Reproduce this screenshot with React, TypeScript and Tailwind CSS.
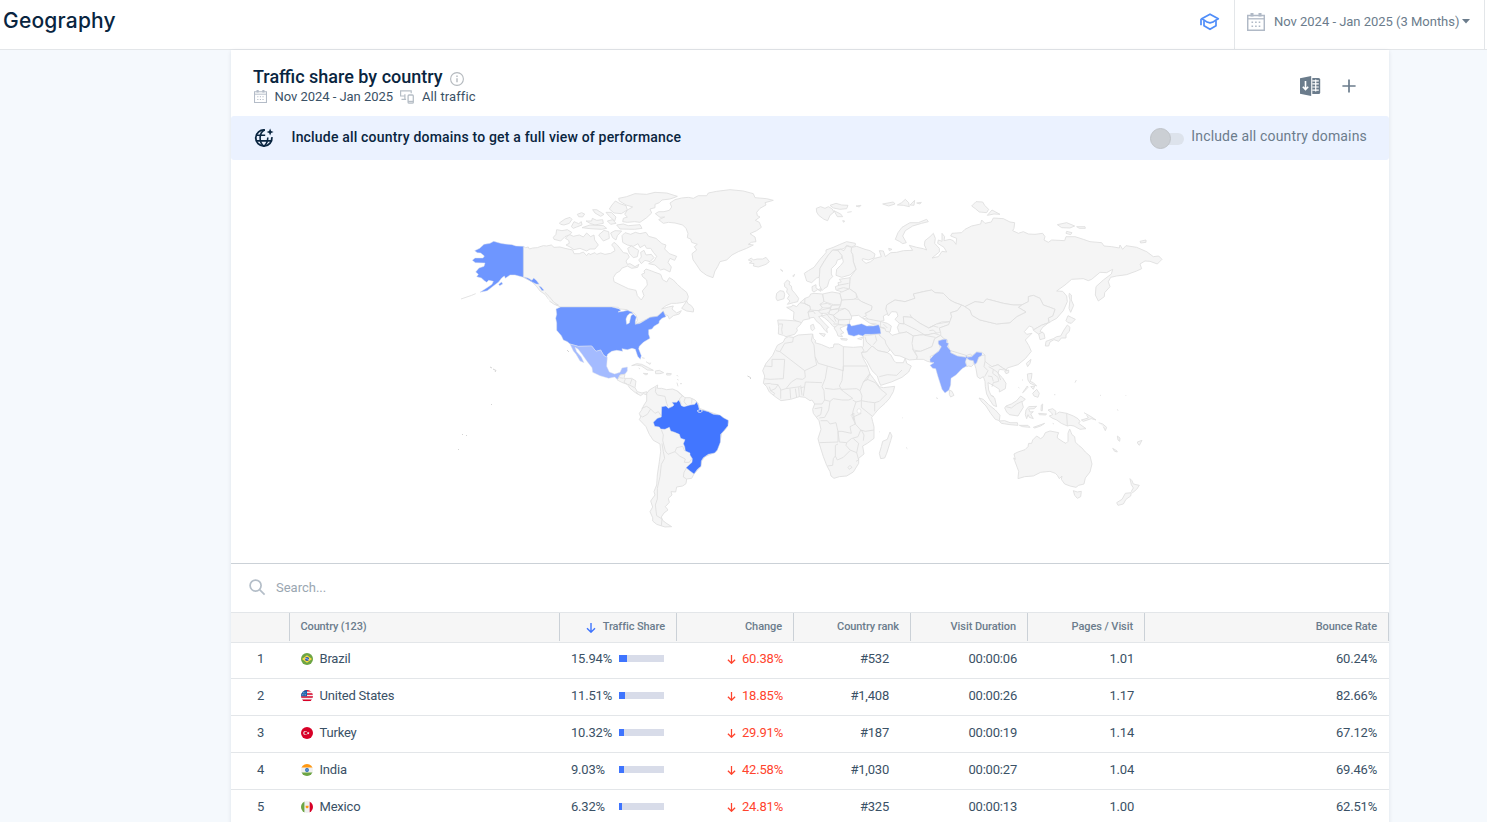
import React from "react";

const NA_LAND = [
  "M-50 184L-43 188L-35 186L-32 192L-22 189L-8 188L0 185L10 182L20 183L34 180L42 187L60 186L75 190L98 195L102 206L118 206L130 201L140 212L146 204L150 209L165 203L170 208L182 204L195 208L212 205L225 197L222 188L215 180L222 172L230 178L240 190L250 203L262 205L268 216L258 228L262 238L270 236L285 245L297 238L293 247L275 250L262 243L245 250L240 258L228 265L220 278L222 290L240 299L265 311L288 316L292 332L304 345L312 332L307 318L322 300L320 285L308 275L305 268L314 264L312 258L318 252L335 258L345 262L362 268L368 284L380 291L388 278L400 285L412 298L425 310L440 322L445 335L442 346L430 352L410 355L395 355L378 362L365 372L385 366L400 363L396 372L410 384L424 377L418 387L400 392L388 402L384 392L374 388L370 378L358 388L352 394L332 396L315 405L300 412L286 418L292 406L289 392L280 382L268 380L262 374L240 372L235 367L215 366L62 366L48 360L38 352L26 343L15 328L0 318L-12 302L-25 290L-50 277Z",
  "M88 148L100 154L118 150L130 156L140 144L152 155L162 150L164 165L175 180L165 192L150 192L140 198L120 190L102 194L90 186L78 180L88 175L86 166L76 160Z",
  "M50 134L66 137L82 134L95 142L90 149L75 155L62 168L42 163L40 157L48 148Z",
  "M58 114L75 102L90 97L96 103L88 115L72 120L62 118Z",
  "M94 125L102 110L116 116L124 110L126 120L110 126L100 130Z",
  "M112 88L125 83L134 87L128 96L116 95Z",
  "M158 74L170 74L192 88L182 94L165 84Z",
  "M138 108L155 108L157 100L170 106L188 104L190 115L165 120L152 116Z",
  "M126 128L150 120L190 122L200 130L185 133L150 131Z",
  "M176 150L192 136L206 140L208 160L190 168L182 158Z",
  "M212 144L225 137L245 138L232 152L228 165L218 158Z",
  "M202 108L218 104L228 115L212 118Z",
  "M198 82L214 82L228 96L224 108L208 94Z",
  "M230 120L250 117L265 122L300 119L306 130L284 133L240 132Z",
  "M208 72L216 60L226 48L240 56L258 62L262 75L244 86L222 84Z",
  "M236 40L260 35L285 26L320 28L345 22L380 24L412 34L402 38L390 42L366 45L358 53L345 58L345 68L330 72L335 84L320 98L300 112L284 110L262 112L248 110L250 100L262 96L254 88L262 75L278 66L258 60L238 48Z",
  "M246 152L255 143L272 148L286 142L300 146L318 142L326 154L348 160L366 176L378 180L374 192L388 206L410 214L404 226L390 220L384 232L394 246L390 261L372 252L362 255L345 240L326 236L342 228L350 214L340 202L332 190L320 190L314 180L300 188L294 176L280 184L262 180L248 172Z",
  "M302 202L312 196L318 210L334 208L342 218L330 230L315 226L304 236L296 225L304 216Z",
  "M263 190L274 183L296 196L292 215L280 218L268 205Z",
  "M425 370L432 360L440 348L444 356L454 362L461 372L460 381L440 378Z",
  "M346 86L356 80L372 80L388 76L395 66L390 54L405 44L425 39L445 37L460 40L475 32L500 32L505 24L530 19L570 14L610 18L640 26L645 38L680 41L700 46L675 53L678 60L660 70L650 82L652 92L660 96L646 106L658 112L664 127L650 137L630 146L645 156L648 170L634 172L625 178L640 180L620 190L595 200L576 210L560 225L540 230L533 245L525 258L519 278L500 271L482 258L470 240L459 224L456 206L470 195L463 185L472 178L455 172L452 162L442 158L444 145L438 130L428 120L405 114L385 112L370 115L356 104L374 96L360 97Z",
  "M625 225L634 219L640 225L652 222L668 222L678 217L688 230L678 238L655 246L640 243L642 236L628 234L636 229Z",
  "M-237 342L-205 331L-193 326M15 322L28 335L42 352L55 360L44 359L28 348",
];

const USA = [
  "M-50 184L-72 183L-84 179L-105 177L-118 175L-139 169L-150 175L-168 178L-181 190L-196 197L-188 203L-178 204L-167 213L-171 219L-195 219L-203 226L-194 233L-165 234L-168 244L-183 249L-193 261L-185 268L-190 275L-176 279L-167 287L-160 292L-154 286L-140 289L-144 298L-159 308L-180 322L-158 317L-140 303L-124 291L-115 279L-107 273L-104 280L-90 270L-75 270L-50 277Z",
  "M-50 275L-36 279L-24 286L-19 279L-10 287L-2 298L-12 297L-24 291Z",
  "M-4 302L4 306L12 316L6 317Z",
  "M-124 298L-115 291L-112 297L-121 302Z",
  "M48 372L62 366L215 366L236 371L243 376L234 381L250 379L262 376L275 381L280 386L270 385L262 392L258 402L260 418L268 414L273 392L280 387L289 396L286 408L286 418L300 415L315 406L330 397L352 394L366 382L370 378L374 388L378 395L366 400L358 408L357 415L342 424L336 432L326 434L326 448L330 460L310 472L298 484L296 491L304 512L301 523L293 514L286 493L276 490L262 494L246 491L248 499L230 496L215 499L203 508L200 517L190 510L182 495L168 499L155 483L115 484L90 477L82 470L70 465L64 452L50 436L50 414L47 400L50 388Z",
];

const MEXICO =
  "M90 477L115 484L155 483L168 499L182 495L192 512L202 517L200 544L208 561L224 567L240 562L246 549L262 546L262 558L255 567L242 570L240 579L234 586L224 576L206 580L180 572L158 562L156 548L142 530L125 506L114 492L105 487L110 500L124 516L132 533L120 528L108 508L100 498Z";

const SA_LAND = [
  "M232 255L240 240L255 238L252 250L275 250L288 258L285 278L292 290L306 294L320 290L322 300L310 296L302 302L286 293L270 280L262 268L245 262Z",
  "M275 212L290 206L305 208L325 218L340 226L322 225L304 213L288 210Z",
  "M346 228L358 226L371 233L360 236L347 236Z",
  "M310 235L324 236L318 240Z M380 235L394 236L392 240L380 240Z",
  "M306 188L314 190M318 200L330 208L332 203M296 219L300 222M410 240L414 244M412 252L415 256M411 263L414 274M420 266L426 266",
  "M320 296L328 285L345 275L353 270L352 280L365 280L380 284L398 282L412 288L422 298L435 308L450 308L465 315L475 325L478 340L500 348L530 358L550 368L565 380L560 398L545 415L540 440L530 468L518 475L495 485L485 498L482 515L462 537L455 550L440 552L438 566L428 573L410 576L407 591L393 590L396 600L385 610L388 622L376 635L384 645L372 654L364 666L368 676L378 684L395 695L375 696L350 688L338 678L338 668L330 650L338 636L332 618L345 600L342 590L350 570L352 540L358 500L362 470L360 447L340 436L328 418L318 395L298 374L302 366L298 355L305 345L312 330L320 318Z",
];

const SA_LINES =
  "M348 276L346 290L352 300L375 304L380 325L384 335M412 288L428 302L418 312L424 328M436 308L432 320L440 330M456 310L455 326M305 340L320 334L332 342L322 358L308 366L302 362M332 342L345 355L355 350L366 366M364 404L370 420L368 436L376 468L384 478L405 470L410 458L428 454L434 468M405 470L420 484L436 492L433 502L448 502L456 490M366 445L370 470L374 490L364 508L360 545L352 580L352 612L346 630L350 662L366 672L364 692M440 518L432 532L430 546L440 552M238 248L250 250M256 252L252 262L262 268M276 252L270 268M264 268L284 278M288 290L294 298";

const BRAZIL =
  "M365 335L378 333L385 340L398 334L402 330L396 322L410 322L416 315L420 322L424 332L432 335L450 330L464 328L470 320L475 332L478 344L490 346L505 350L520 358L540 360L550 368L565 376L564 392L553 406L542 418L541 442L532 465L524 474L505 478L490 488L484 498L483 514L473 522L462 537L450 528L438 518L456 502L457 491L450 480L450 474L436 468L434 455L430 446L435 434L422 430L418 418L404 412L392 408L388 397L375 403L362 402L358 396L344 394L340 382L352 370L364 366Z";

const EUROPE = [
  "M163 250L175 242L192 232L210 208L228 188L228 180L250 172L268 164L290 155L316 160L316 166L305 171L290 166L282 176L270 178L248 180L235 195L222 215L210 235L208 262L200 264L185 278L170 273Z",
  "M208 262L210 235L222 215L235 195L248 180L264 182L276 196L274 206L262 210L258 222L244 236L244 252L248 260L238 270L232 290L222 296L216 302L208 285Z",
  "M264 182L270 177L282 182L290 168L305 172L303 184L308 194L310 215L318 238L300 255L275 262L258 256L260 238L272 226L280 216L276 196Z",
  "M103 280L112 270L120 276L117 283L124 288L126 300L135 310L146 325L143 335L130 338L112 343L120 333L112 326L118 316L110 306L112 296L104 290Z",
  "M80 310L90 302L101 304L104 313L102 326L82 332L78 324Z",
  "M83 390L100 390L140 393L155 395L152 403L140 414L142 422L134 433L108 440L100 436L85 432L86 410Z",
  "M110 352L125 350L128 345L140 350L150 338L162 336L180 348L182 356L174 366L180 386L160 390L155 398L140 393L130 388L132 366Z",
  "M150 338L165 325L178 320L182 312L192 310L218 312L222 335L210 343L218 354L205 362L182 362L180 348L162 340Z",
  "M186 290L198 284L198 294L204 298L192 306L187 303Z M204 299L212 296L212 304Z",
  "M218 312L246 306L270 310L275 328L272 345L250 344L222 335Z",
  "M174 366L182 360L205 362L218 370L214 378L206 380L222 398L236 412L230 416L232 428L224 420L212 404L198 392L192 382L178 384Z",
  "M182 406L190 403L194 416L188 422L183 418Z M208 430L226 432L222 440Z",
  "M210 343L232 340L245 346L240 354L218 354Z M205 362L240 354L244 362L230 370L212 370Z",
  "M245 346L272 345L265 356L240 360Z M240 360L265 356L266 366L250 376L236 372Z",
  "M214 378L236 372L250 376L258 384L266 390L266 402L258 412L250 410L238 396L224 384Z",
  "M250 376L268 362L285 355L296 362L305 378L304 388L270 390L258 384Z",
  "M266 390L300 388L298 402L282 406L264 402Z",
  "M252 414L264 404L290 406L270 414L276 424L282 428L272 432L278 440L264 438L260 426Z M272 445L292 447L290 451L274 449Z",
  "M272 345L275 330L300 325L325 328L335 335L366 348L364 360L345 370L350 376L336 384L326 376L304 378L296 362L285 355L266 358Z",
  "M270 310L276 304L298 296L318 310L320 324L310 328L275 330Z",
  "M258 300L256 290L266 286L264 278L274 276L268 268L300 263L298 296L276 306Z",
  "M323 446L340 441L334 449Z M92 238L99 244L93 241Z M128 258L134 253L131 260Z",
  "M199 55L212 50L225 55L235 50L246 56L252 66L240 76L233 92L222 88L206 76L200 66Z",
  "M240 46L258 40L275 45L294 46L290 56L270 58L250 54Z M252 62L272 72L278 80L262 80Z M318 48L333 46L328 51Z M278 92L284 93L281 97Z M292 67L305 65",
  "M338 385L360 388L390 394L412 400L424 408L420 426L408 424L404 414L388 410L380 402L360 400Z",
];

const EU_LINES =
  "M86 402L98 402L95 418L97 432M174 366L190 364L196 372M264 286L296 280M262 298L280 293L296 296M230 372L240 385L254 398M250 376L258 395M262 402L250 402M165 325L164 340L178 348M392 396L390 412L404 416M400 402L412 414";

const ASIA = [
  "M-55 172L-40 169L-15 178L0 182L15 192L12 204L-5 210L-22 206L-24 210L-12 220L2 215L14 205L34 200L28 182L40 183L46 200L62 188L80 187L100 182L128 181L118 166L140 172L160 176L170 180L163 165L165 152L180 140L190 130L196 145L194 160L208 175L208 186L186 204L205 200L216 184L230 186L222 172L203 160L205 150L216 154L216 130L224 140L222 152L240 148L250 152L258 163L260 145L242 138L246 130L275 128L285 118L305 108L332 102L335 90L345 100L364 96L370 84L400 86L420 96L434 98L432 115L428 122L445 130L460 125L475 132L495 133L518 130L525 140L522 150L535 157L545 150L584 152L588 140L615 140L640 148L660 155L695 158L702 168L725 170L748 174L750 165L758 178L768 167L800 172L830 185L850 200L866 198L876 208L862 222L840 214L825 213L810 222L815 236L800 243L770 254L740 258L722 262L715 275L720 290L704 308L703 320L685 333L676 315L678 290L700 270L724 252L728 238L710 248L690 247L665 268L655 272L640 266L605 268L585 285L560 303L578 304L590 318L592 335L580 362L560 385L545 393L538 398L535 384L548 378L555 358L540 352L520 345L510 325L490 316L475 320L475 335L455 345L430 345L400 340L370 332L350 327L340 338L315 335L285 350L275 345L255 338L240 330L220 310L195 308L185 300L160 305L130 312L135 325L120 330L105 335L75 330L50 345L48 358L55 370L40 378L42 392L25 395L-5 388L-20 375L-12 370L4 360L6 350L-25 335L-35 328L-42 310L-62 296L-60 263L-42 238L-50 215L-52 194L-57 184Z",
  "M50 345L75 330L105 335L135 325L130 312L160 305L185 300L195 308L220 310L240 330L255 338L275 345L262 362L242 368L245 380L240 395L215 396L200 402L176 414L150 400L125 382L100 380L102 402L88 400L75 388L84 378L80 366L65 365L55 378L48 358Z",
  "M88 400L102 402L100 380L125 382L150 400L176 414L200 402L240 395L236 404L208 414L212 428L192 430L174 434L150 435L130 438L110 426L88 430L82 412Z",
  "M-5 408L15 402L25 398L45 408L50 418L66 436L88 430L110 426L130 438L128 452L132 468L128 478L142 500L140 508L118 510L90 498L74 496L60 478L52 478L34 456L28 430Z",
  "M130 438L150 435L174 434L192 430L212 436L194 446L186 470L152 484L130 480L126 460Z",
  "M142 500L134 484L152 484L186 470L194 446L212 436L222 446L206 455L212 478L192 494L180 500L188 518L172 514L160 508L140 508Z",
  "M275 345L285 350L300 360L306 376L330 390L380 402L420 398L440 380L468 366L445 352L455 345L475 335L475 320L490 316L510 325L520 345L540 352L555 358L548 378L535 384L536 398L514 406L490 420L488 412L478 408L463 425L470 433L486 430L466 450L476 466L484 484L466 506L444 524L412 534L408 541L398 534L384 524L366 530L345 535L330 515L345 495L335 487L320 486L305 498L290 498L262 490L240 482L234 466L232 450L222 446L212 436L212 428L208 414L236 404L245 380L242 368L262 362Z",
  "M285 350L315 335L340 338L350 327L370 332L400 340L430 345L455 345L445 352L468 366L440 380L420 398L380 402L330 390L306 376L300 360Z",
  "M490 420L514 406L536 398L518 412L510 424L522 430L525 445L510 449L506 432L496 426Z",
  "M594 377L604 382L616 388L604 400L594 398L588 392Z M592 405L600 412L598 424L588 434L588 444L574 444L566 454L552 449L540 456L536 468L526 468L528 454L550 446L560 440L572 438L582 420Z",
  "M598 310L604 315L604 330L611 346L602 367L597 355L600 330L597 318Z",
  "M483 508L480 520L473 530L469 520Z",
  "M76 148L84 128L96 112L120 98L145 98L170 88L175 95L155 100L128 108L106 122L98 138L109 158L98 161L88 154Z",
  "M305 48L318 35L338 36L344 46L356 58L350 68L328 66L316 56Z M352 76L366 60L390 73L372 72Z",
  "M562 104L590 98L614 108L600 114L575 113Z M620 110L645 110L646 115L628 115Z M590 124L606 128L602 134L588 130Z M810 154L828 150L828 157L812 159Z",
  "M38 42L70 36L75 42L56 48Z M82 45L95 38L106 28L116 38L118 50L100 46Z M120 45L134 31L132 46Z M140 39L154 37L150 42Z M56 175L66 178L58 182Z",
];

const ASIA_LINES =
  "M100 400L120 410L140 420L166 436M120 373L126 385M176 414L190 408L205 412M178 422L190 420L200 430M506 432L518 426M0 434L15 440L25 450L36 458L46 468L52 478M164 436L196 442";

const INDIA =
  "M205 32L222 28L230 28L230 38L236 40L232 50L242 62L242 68L262 78L288 82L289 76L292 82L305 80L320 66L336 68L336 76L326 82L320 98L314 104L310 92L298 90L290 84L286 96L290 108L276 116L258 135L243 145L242 165L237 180L225 189L216 178L204 140L197 116L188 115L180 106L192 98L180 96L180 88L192 74L206 64L214 50L205 42Z";

const SOUTH = [
  "M242 62L262 68L288 76L288 82L262 78L242 68Z M290 76L302 72L306 78L292 80Z",
  "M286 90L290 86L300 90L310 92L310 104L304 110L296 108L290 110Z",
  "M238 180L246 184L252 196L242 201L238 194Z",
  "M314 104L320 98L326 82L336 76L345 75L345 94L356 103L366 110L384 104L398 114L412 121L388 118L384 130L398 144L408 160L406 176L388 186L388 178L376 170L362 162L354 158L356 180L362 194L374 204L380 230L370 226L358 208L350 192L346 170L345 154L340 140L330 146L322 140L318 116Z",
  "M327 204L340 208L356 224L376 240L390 256L388 272L376 268L362 250L348 228L336 216Z",
  "M388 273L404 272L420 278L442 278L444 286L420 284L394 280Z M448 286L474 286L480 292L458 290Z M490 292L524 280L512 288L494 294Z",
  "M408 228L424 222L440 212L452 198L466 208L456 216L460 232L450 248L444 258L418 254L410 246L404 234Z",
  "M468 240L476 230L500 229L492 236L476 237L480 246L490 245L482 252L490 266L478 262L474 254L470 266L466 254Z",
  "M472 132L486 130L484 146L480 154L490 158L500 168L480 160L474 150Z M482 170L494 168L490 178Z M488 190L500 178L508 190L504 202L492 198Z M458 188L472 168L474 172L460 187Z",
  "M404 124L416 120L416 128L408 131Z M514 225L518 222L517 242L513 242Z M506 250L530 252L526 255L508 254Z",
  "M534 240L548 236L558 244L556 254L568 246L590 250L610 258L624 266L630 274L626 280L648 296L630 298L612 288L600 286L592 288L574 280L560 270L546 264L538 258L548 254L544 248Z",
  "M642 248L660 258L678 270L664 266L640 274L634 270L655 264L650 256M686 278L698 282L710 292L706 302L700 290M728 355L740 362L742 366L734 364ZM742 318L750 324L749 334L744 330ZM802 336L816 331L808 346L804 342Z",
  "M432 372L444 366L465 359L474 350L476 340L485 340L488 330L500 318L512 326L520 320L526 308L540 303L566 308L562 318L562 324L580 336L588 340L594 334L594 310L599 297L606 314L614 320L616 336L626 346L636 354L646 366L660 378L666 402L660 426L646 444L642 462L626 466L618 472L600 468L584 462L574 448L576 438L568 446L562 436L556 430L540 424L512 427L490 438L464 440L444 446L446 424L434 392L431 384L436 388Z",
  "M610 482L622 486L634 484L632 500L622 505L614 496Z",
  "M780 446L786 452L790 462L808 466L800 478L788 488L784 484L790 474L784 464ZM766 490L784 488L782 498L768 508L760 522L744 526L740 518L756 508Z",
  "M60 306L66 318L62 332L50 370L44 384L32 386L28 370L34 350L38 334L52 328Z",
  "M456 149L459 151M615 158L619 150M552 194L556 194M690 196L693 196M766 195L768 197M742 238L744 242M96 262L98 264M108 352L112 356M198 203L204 206M27 304L29 306M445 172L448 174",
];

const SOUTH_LINES =
  "M345 94L342 110L354 122L344 140M356 110L370 118L368 130L384 142L386 154L370 158L366 170M370 118L384 128L392 150M370 154L366 140L354 138M362 196L372 200M590 250L592 288M408 230L424 234L440 222L456 214M548 280L552 282";

const AFRICA = [
  "M340 45L352 46L386 42L390 48L405 60L408 72L420 90L412 98L384 92L366 78L350 96L328 98L340 78Z",
  "M328 98L350 96L366 78L384 92L412 98L422 104L432 122L438 128L460 128L466 114L470 130L484 138L476 156L456 172L424 186L392 196L386 182L382 168L366 152L350 122Z",
  "M105 55L116 50L130 52L145 45L188 42L190 55L197 62L195 68L215 74L238 84L250 82L252 72L266 72L280 80L310 82L335 80L342 92L334 98L340 116L352 138L360 162L370 175L388 200L400 203L434 199L430 215L418 236L405 250L385 268L375 280L365 292L368 305L372 320L372 355L352 370L338 378L342 402L326 415L326 430L310 456L290 468L268 470L252 475L243 468L240 455L230 436L220 410L208 372L204 356L213 328L207 302L190 280L188 268L194 252L186 240L180 242L165 232L148 230L122 238L93 242L78 232L58 216L50 200L40 190L44 168L38 152L48 130L68 106L82 76L100 66Z",
];

const AFRICA_LINES =
  "M78 92L90 95L104 70L128 66L130 52M104 118L66 118L66 140L44 138M90 95L164 152L166 172L158 178L140 176L124 186L108 206L94 210L90 206M104 118L100 176L60 178M188 42L184 62L192 75L195 110L205 130L232 138L280 152L280 80M195 110L200 135L164 152M280 138L352 138M232 138L226 175L216 200L222 212L224 240M164 200L166 186L216 188M160 228L164 200L152 204M225 205L250 208L270 206L280 214L308 235L296 240L276 240L250 236L240 244M276 182L268 198L276 210M280 138L276 182M276 208L320 206L330 212L336 228L334 242L356 246L374 248M330 212L340 186L360 160M340 186L352 178L376 188L392 208L410 222L388 244L374 248L374 274M350 182L360 162M308 240L318 246L334 242L334 262L366 288M318 246L310 270L306 290L316 312L300 320L304 340L276 334L264 334M192 252L216 252L224 240L240 244L236 270L224 292L208 294M212 302L232 302L240 312L258 308L264 334L264 366L208 368M264 334L268 366L290 368L304 356L324 350L332 330L316 312M332 330L346 334L372 330M316 312L312 290L334 280M290 368L288 376L300 390L320 398L326 370L310 356M264 372L256 376L256 408L250 416L248 436L232 438M256 408L262 420L280 412L300 392M320 398L326 420L318 424M294 442L300 436L306 442L298 448ZM334 330L342 345L340 362M60 178L42 176M62 192L84 194L92 208L92 236M84 194L76 206L62 212L74 220L70 226M120 206L122 236M136 206L140 232M146 202L148 230M152 196L156 226M108 206L150 200M42 192L62 190M58 200L62 212M194 266L216 262L212 284L200 290M302 286L312 280L310 300M345 50L350 66L364 78M376 46L380 62L370 74M388 170L412 164L440 166L456 150";

function Land({ x, y, shapes, lines }: { x: number; y: number; shapes: string[]; lines?: string }) {
  return (
    <g transform={`translate(${x} ${y}) scale(0.33333)`} fill="#f5f5f5" stroke="#dedede" strokeWidth={2.6} strokeLinejoin="round">
      {shapes.map((d) => (
        <path key={d} d={d} />
      ))}
      {lines && <path d={lines} fill="none" />}
    </g>
  );
}

function Active({ x, y, shapes, color }: { x: number; y: number; shapes: string[]; color: string }) {
  return (
    <g transform={`translate(${x} ${y}) scale(0.33333)`} fill={color} stroke="#dfe3ee" strokeWidth={1.4} strokeLinejoin="round">
      {shapes.map((d) => (
        <path key={d} d={d} />
      ))}
    </g>
  );
}

function WorldMap() {
  return (
    <svg className="block h-[403px] w-[1158px]" viewBox="231 160 1158 403">
      <Land x={540} y={185} shapes={NA_LAND} />
      <Active x={540} y={185} shapes={USA} color="#6e96ff" />
      <Active x={540} y={185} shapes={[MEXICO]} color="#a4bbff" />
      <Land x={540} y={295} shapes={SA_LAND} lines={SA_LINES} />
      <Active x={540} y={295} shapes={[BRAZIL]} color="#4276ff" />
      <path d="M697.5 410.5l3-1 2 1.5-2 1.5-2.500-.5z" fill="#4276ff" stroke="#eee" strokeWidth="0.8" />
      <Land x={870} y={190} shapes={ASIA} lines={ASIA_LINES} />
      <Land x={750} y={190} shapes={EUROPE} lines={EU_LINES} />
      <Land x={750} y={320} shapes={AFRICA} lines={AFRICA_LINES} />
      <ellipse cx="859" cy="411" rx="2" ry="2.300" fill="#fff" stroke="#dedede" strokeWidth="0.6" />
      <Active
        x={750}
        y={190}
        shapes={["M291 403L300 401L304 408L318 405L335 401L350 408L370 408L386 404L390 414L393 431L365 433L345 433L338 438L326 434L312 439L295 434L290 418L292 409Z"]}
        color="#7a9eff"
      />
      <Land x={870} y={330} shapes={SOUTH} lines={SOUTH_LINES} />
      <Active x={870} y={330} shapes={[INDIA]} color="#8aa8ff" />
      <g fill="none" stroke="#cfcfcf" strokeWidth="0.9">
        <path d="M490 367l2 1M493 369l3 1.500-1 1.500M491 404l1 1M462 434l1 1M466 435l1 1M458 449l1 1M567 350l2 2M747.500 376l3 1.500v1.500" />
      </g>
    </svg>
  );
}

function Calendar({ size, color, className }: { size: number; color: string; className?: string }) {
  return (
    <svg width={size} height={size} viewBox="0 0 18 18" className={className} fill="none" stroke={color}>
      <path d="M.7 2.500h16.600v14.800H.7z" strokeWidth="1.500" />
      <path d="M.7 5.800h16.600" strokeWidth="1.300" />
      <path d="M5 0v3.500M13 0v3.500" strokeWidth="3" />
      <path d="M4.500 9.300h9.500M4.500 13.200h9.500" strokeWidth="1.600" strokeDasharray="1.600 2" />
    </svg>
  );
}

function Devices() {
  return (
    <svg width="14" height="14" viewBox="0 0 14 14" fill="none" stroke="#b6bec6" className="mb-px">
      <path d="M.6 4.500V.8h10.600v2.400M.6 4.500V6h4.600M4.900 4.200v5.300M1.500 9.300h4.600" strokeWidth="1.200" />
      <rect x="8.100" y="5" width="5.200" height="8.200" rx="1" strokeWidth="1.300" />
      <path d="M8 11.500h5.200" strokeWidth="1.400" />
    </svg>
  );
}

function GlobeSpark() {
  return (
    <svg width="20" height="20" viewBox="0 0 20 20" fill="none" stroke="#092540" strokeWidth="1.800">
      <path d="M10.800 2A8.100 8.100 0 1 0 17.900 9.200" />
      <path d="M10.800 2C4.700 4.500 4.700 14.500 9.800 18.100C12.600 16.400 13.700 13.500 13.800 9.400M2.200 7.300h9M2.200 12.900h15.200" strokeWidth="1.600" />
      <path d="M16.100.6l1 2.500 2.500 1-2.500 1-1 2.500-1-2.500-2.500-1 2.500-1z" fill="#092540" stroke="none" />
    </svg>
  );
}

function ExcelIcon() {
  return (
    <svg width="21" height="20" viewBox="0 0 21 20">
      <path d="M0 2.200L11.200 0v20L0 17.800z" fill="#6b7c8c" />
      <path d="M5.500 5v8M2.800 10.700l2.700 2.800 2.700-2.800" fill="none" stroke="#fff" strokeWidth="1.600" />
      <path d="M12.300 1.900h6.300q1.600 0 1.600 1.600v13q0 1.600-1.600 1.600h-6.300z" fill="#6b7c8c" />
      <path d="M12.300 4.800h6.500M12.300 7.900h6.500M12.300 11h6.500M12.300 14.100h6.500M15.700 3.500v12" stroke="#fff" strokeWidth="1.200" />
    </svg>
  );
}

function GradCap() {
  return (
    <svg width="20" height="18" viewBox="0 0 20 18" fill="none" stroke="#4f8df9" strokeWidth="1.700" strokeLinejoin="round">
      <path d="M10 1.200L18.300 5.800L15.200 7.500Q13.500 9.400 10 9.900Q6.500 9.400 4.800 7.500L1.700 5.800z" />
      <path d="M4 7.500v5.300l6 3.500 6-3.500V7.500M1 5.800v6.400" />
    </svg>
  );
}

function DownArrow({ color, className }: { color: string; className?: string }) {
  return (
    <svg width="10" height="10" viewBox="0 0 10 10" fill="none" stroke={color} strokeWidth="1.400" className={className}>
      <path d="M5 0v9M1 5.200l4 4 4-4" />
    </svg>
  );
}

function Flag({ name }: { name: string }) {
  const id = `flag-${name.replace(" ", "-")}`;
  return (
    <svg width="12" height="12" viewBox="0 0 12 12" className="shrink-0">
      <clipPath id={id}>
        <circle cx="6" cy="6" r="6" />
      </clipPath>
      <g clipPath={`url(#${id})`}>
        {name === "Brazil" && (
          <>
            <path d="M0 0h12v12H0z" fill="#6da544" />
            <path d="M6 2.200L11 6 6 9.800 1 6z" fill="#ffda44" />
            <circle cx="6" cy="6" r="2.100" fill="#1f56b0" />
            <path d="M4 5.600q2-.3 3.900 1.200" stroke="#f0f0f0" strokeWidth=".7" fill="none" />
          </>
        )}
        {name === "United States" && (
          <>
            <path d="M0 0h12v12H0z" fill="#f0f0f0" />
            <path d="M0 .8h12M0 3.900h12M0 7h12M0 10.200h12" stroke="#d80027" strokeWidth="1.500" />
            <path d="M0 0h6v6.300H0z" fill="#1560ad" />
            <path d="M1 4.800h4M2 2.800h3" stroke="#f0f0f0" strokeWidth=".7" strokeDasharray=".7 .9" />
          </>
        )}
        {name === "Turkey" && (
          <>
            <path d="M0 0h12v12H0z" fill="#d80027" />
            <circle cx="4.300" cy="6" r="2.100" fill="#f0f0f0" />
            <circle cx="4.900" cy="6" r="1.600" fill="#d80027" />
            <path d="M7.200 4.800l.4.800.9.100-.6.700.1.900-.8-.4-.9.400.2-.9-.6-.7.900-.1z" fill="#f0f0f0" />
          </>
        )}
        {name === "India" && (
          <>
            <path d="M0 0h12v12H0z" fill="#f0f0f0" />
            <path d="M0 0h12v3.600H0z" fill="#ff9811" />
            <path d="M0 8.600h12V12H0z" fill="#6da544" />
            <circle cx="6" cy="6" r="1.900" fill="#1f66b8" />
            <circle cx="6" cy="6" r=".8" fill="#9cbbe0" />
          </>
        )}
        {name === "Mexico" && (
          <>
            <path d="M0 0h12v12H0z" fill="#f0f0f0" />
            <path d="M0 0h3.400v12H0z" fill="#6da544" />
            <path d="M8.700 0H12v12H8.700z" fill="#d80027" />
            <path d="M4.600 4.800h3L7.500 6.500 6 7.600 4.700 6.500z" fill="#ff9811" />
          </>
        )}
      </g>
    </svg>
  );
}

const ROWS = [
  { country: "Brazil", share: "15.94%", bar: 8, change: "60.38%", rank: "#532", time: "00:00:06", pages: "1.01", bounce: "60.24%" },
  { country: "United States", share: "11.51%", bar: 6, change: "18.85%", rank: "#1,408", time: "00:00:26", pages: "1.17", bounce: "82.66%" },
  { country: "Turkey", share: "10.32%", bar: 5, change: "29.91%", rank: "#187", time: "00:00:19", pages: "1.14", bounce: "67.12%" },
  { country: "India", share: "9.03%", bar: 5, change: "42.58%", rank: "#1,030", time: "00:00:27", pages: "1.04", bounce: "69.46%" },
  { country: "Mexico", share: "6.32%", bar: 3, change: "24.81%", rank: "#325", time: "00:00:13", pages: "1.00", bounce: "62.51%" },
];

const GRID = "grid grid-cols-[59px_270px_117px_117px_117px_117px_117px_244px]";
const HEAD = "flex items-center border-r border-[#cbd1d7] pr-[11px] h-[28px]";

export default function App() {
  return (
    <div className="flex h-[822px] w-[1487px] flex-col overflow-hidden bg-[#f5f9fd] font-['Roboto',sans-serif] text-[13px] text-[#3a5166]">
      <header className="flex h-[50px] shrink-0 items-start justify-between border-b border-[#e3e6e9] bg-white">
        <h1 className="pl-[3px] pt-[5px] font-['Inter',sans-serif] text-[21px] font-medium leading-[32px] tracking-[0.2px] text-[#092540]">Geography</h1>
        <div className="flex h-[49px]">
          <div className="flex w-[35px] justify-start pl-px pt-[13px]">
            <GradCap />
          </div>
          <div className="flex w-[251px] items-start border-x border-[#e3e6e9] pl-[12px] pt-[12px] text-[#6b7c8c]">
            <Calendar size={18} color="#b0b9c6" className="mt-px" />
            <span className="ml-[9px] whitespace-nowrap leading-[19px] tracking-[-0.02px]">Nov 2024 - Jan 2025 (3 Months)</span>
            <svg width="8" height="5" viewBox="0 0 8 5" className="ml-[3px] mt-[7px]">
              <path d="M0 0h8L4 4.500z" fill="#6b7c8c" />
            </svg>
          </div>
          <div className="w-[2px]" />
        </div>
      </header>

      <main className="ml-[231px] flex w-[1158px] grow flex-col bg-white shadow-[0_1px_4px_rgba(14,30,62,0.10)]">
        <div className="flex h-[66px] shrink-0 items-start justify-between pl-[22px]">
          <div className="flex flex-col">
            <div className="flex h-[37px] items-start pt-[16px]">
              <h2 className="whitespace-nowrap text-[18px] font-medium leading-[22px] text-[#092540]">Traffic share by country</h2>
              <svg width="14" height="14" viewBox="0 0 14 14" className="ml-[7px] mt-[6px]" fill="none" stroke="#b4b9be">
                <circle cx="7" cy="7" r="6.400" strokeWidth="1.100" />
                <path d="M7 6.200v4M7 3.600v1.300" strokeWidth="1.400" />
              </svg>
            </div>
            <div className="flex h-[20px] items-center">
              <Calendar size={13} color="#b4bcc8" className="mb-[2px] ml-px" />
              <span className="ml-[7.500px] w-[125.500px] whitespace-nowrap tracking-[-0.04px]">Nov 2024 - Jan 2025</span>
              <Devices />
              <span className="ml-[8px] tracking-[0.1px]">All traffic</span>
            </div>
          </div>
          <div className="flex pt-[26px]">
            <ExcelIcon />
            <svg width="14" height="14" viewBox="0 0 14 14" className="ml-[21px] mr-[33px] mt-[3px]" stroke="#6b7c8c" strokeWidth="1.700">
              <path d="M7 .4v13.200M.4 7h13.200" />
            </svg>
          </div>
        </div>

        <div className="flex h-[44px] shrink-0 items-center rounded-[3px] bg-[#ebf2ff] pl-[23px] pr-[22px]">
          <GlobeSpark />
          <span className="-mt-[2px] ml-[17.500px] whitespace-nowrap text-[14px] font-medium leading-[20px] tracking-[0.18px] text-[#092540]">Include all country domains to get a full view of performance</span>
          <div className="ml-auto flex items-center">
            <span className="mt-px flex h-[12px] w-[34px] items-center rounded-full bg-[#dde3ec]">
              <span className="size-[21px] shrink-0 rounded-full border border-[#bfc3c8] bg-[#cbcfd4]" />
            </span>
            <span className="-mt-[4px] ml-[7px] whitespace-nowrap text-[14px] tracking-[0.17px] text-[#6b7c8c]">Include all country domains</span>
          </div>
        </div>

        <div className="h-[403px] shrink-0">
          <WorldMap />
        </div>

        <div className="flex h-[49px] shrink-0 items-center border-t border-[#cbd1d7] pl-[18px]">
          <svg width="17" height="17" viewBox="0 0 17 17" fill="none" stroke="#b4bec8" strokeWidth="1.700" className="-mt-px">
            <circle cx="6.600" cy="6.600" r="5.500" />
            <path d="M10.600 10.600l5 5" />
          </svg>
          <span className="ml-[10px] text-[#9aa6b1]">Search...</span>
        </div>

        <div className={`${GRID} h-[31px] shrink-0 border-y border-[#e3e6e9] bg-[#f6f6f6] text-[11px] font-medium tracking-[-0.08px] text-[#6b7c8c]`}>
          <div className={HEAD} />
          <div className={`${HEAD} pl-[10.500px] tracking-[-0.14px]`}>Country (123)</div>
          <div className={`${HEAD} justify-end`}>
            <DownArrow color="#3e74fe" className="mr-[7px] mt-px" />
            Traffic Share
          </div>
          <div className={`${HEAD} justify-end`}>Change</div>
          <div className={`${HEAD} justify-end`}>Country rank</div>
          <div className={`${HEAD} justify-end`}>Visit Duration</div>
          <div className={`${HEAD} justify-end`}>Pages / Visit</div>
          <div className={`${HEAD} justify-end`}>Bounce Rate</div>
        </div>

        {ROWS.map((r, i) => (
          <div key={r.country} className={`${GRID} ${i === 0 ? "h-[36px] pb-[3px]" : "h-[37px] pb-[2px]"} shrink-0 items-center border-b border-[#e3e6e9] tracking-[-0.2px]`}>
            <span className="text-center">{i + 1}</span>
            <span className="flex items-center gap-[6.500px] pl-[11px]">
              <Flag name={r.country} />
              {r.country}
            </span>
            <span className="flex items-center pl-[11px]">
              <span className="w-[48px]">{r.share}</span>
              <span className="mb-px flex h-[7px] w-[45px] bg-[#d8dce9]">
                <span className="bg-[#3e74fe]" style={{ width: r.bar }} />
              </span>
            </span>
            <span className="flex items-center justify-end pr-[11px] text-[#ff442d]">
              <DownArrow color="#ff442d" className="mr-[6px] size-[9px]" />
              {r.change}
            </span>
            <span className="pr-[22px] text-right">{r.rank}</span>
            <span className="pr-[11px] text-right">{r.time}</span>
            <span className="pr-[11px] text-right">{r.pages}</span>
            <span className="pr-[12px] text-right">{r.bounce}</span>
          </div>
        ))}
      </main>
    </div>
  );
}
